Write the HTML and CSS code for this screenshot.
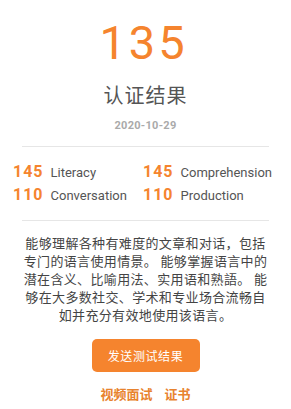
FILE: index.html
```html
<!DOCTYPE html>
<html lang="zh-CN">
<head>
<meta charset="utf-8">
<title>认证结果</title>
<link rel="stylesheet" href="styles.css">
</head>
<body>
<main class="result">
  <div class="score">135</div>
  <h1 class="title">认证结果</h1>
  <div class="date">2020-10-29</div>
  <hr class="divider">
  <div class="stats">
    <div class="stat"><span class="num">145</span><span class="label">Literacy</span></div>
    <div class="stat"><span class="num">145</span><span class="label">Comprehension</span></div>
    <div class="stat"><span class="num">110</span><span class="label">Conversation</span></div>
    <div class="stat"><span class="num">110</span><span class="label">Production</span></div>
  </div>
  <hr class="divider">
  <p class="desc">能够理解各种有难度的文章和对话，包括专门的语言使用情景。 能够掌握语言中的潜在含义、比喻用法、实用语和熟語。 能够在大多数社交、学术和专业场合流畅自如并充分有效地使用该语言。</p>
  <button class="send" type="button">发送测试结果</button>
  <nav class="links">
    <a class="link" href="#">视频面试</a>
    <a class="link" href="#">证书</a>
  </nav>
</main>
</body>
</html>
```

FILE: styles.css
```css
html, body {
  margin: 0;
  padding: 0;
  background: #ffffff;
}

.result {
  width: 291px;
  display: flex;
  flex-direction: column;
  align-items: center;
  padding-top: 21px;
  font-family: Roboto, "Noto Sans CJK SC", sans-serif;
}

.score {
  font-size: 47px;
  line-height: 44px;
  font-weight: 400;
  letter-spacing: 3px;
  padding-left: 0;
  margin-left: -4px;
  color: #f5842e;
}

.title {
  margin: 16px 0 0;
  font-family: "Noto Sans CJK SC", sans-serif;
  font-size: 20px;
  line-height: 28px;
  font-weight: 400;
  letter-spacing: 1px;
  color: #555555;
}

.date {
  margin-top: 10px;
  font-size: 11px;
  line-height: 14px;
  font-weight: 700;
  letter-spacing: 0.3px;
  color: #aaaaaa;
}

.divider {
  align-self: stretch;
  margin: 13px 22px 0 22px;
  border: 0;
  height: 1px;
  background: #e6e6e6;
}

.stats {
  align-self: stretch;
  margin-top: 14px;
  padding-left: 13px;
  display: grid;
  grid-template-columns: 130px 1fr;
}

.stat {
  display: flex;
  align-items: baseline;
  gap: 7px;
  line-height: 22px;
}

.num {
  font-size: 16px;
  font-weight: 700;
  letter-spacing: 1px;
  color: #f5842e;
}

.label {
  font-size: 13px;
  color: #555555;
}

.desc {
  width: 246px;
  margin: 13px 0 0;
  font-family: "Noto Sans CJK SC", sans-serif;
  font-size: 13px;
  line-height: 18px;
  letter-spacing: 0.35px;
  text-align: center;
  color: #444444;
}

.send {
  margin-top: 15px;
  width: 108px;
  height: 33px;
  border: 0;
  border-radius: 5px;
  background: #f5842e;
  color: #ffffff;
  font-family: "Noto Sans CJK SC", sans-serif;
  font-size: 12px;
  letter-spacing: 0.6px;
  padding: 0;
}

.links {
  margin-top: 13px;
  display: flex;
  gap: 12px;
  line-height: 18px;
}

.link {
  font-family: "Noto Sans CJK SC", sans-serif;
  font-size: 13px;
  font-weight: 700;
  color: #e8832f;
  text-decoration: none;
}
```
